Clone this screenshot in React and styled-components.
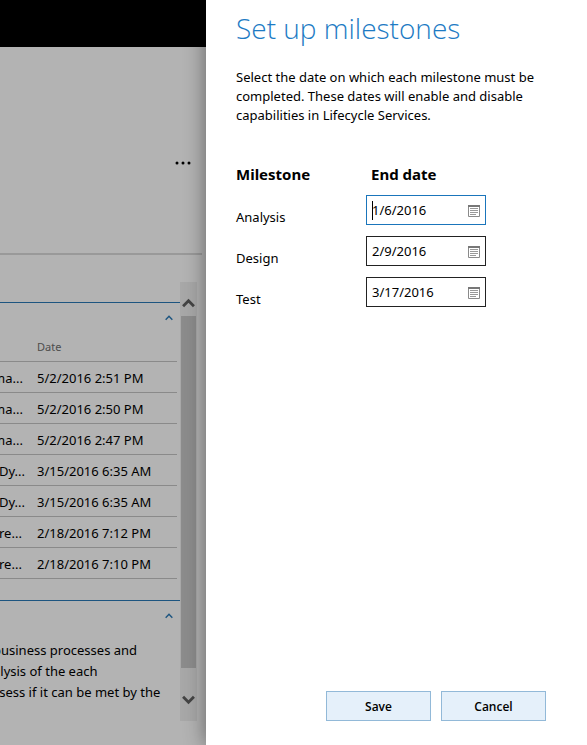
import React from "react";
import styled, { createGlobalStyle } from "styled-components";

const GlobalStyle = createGlobalStyle`
  *, *::before, *::after { box-sizing: border-box; }
  body {
    margin: 0;
    font: 13px/19px "Noto Sans", "Segoe UI", sans-serif;
    color: #000;
    background: #fff;
  }
`;

const Layout = styled.div`
  display: flex;
  min-height: 100vh;
  overflow: hidden;
`;

const Page = styled.div`
  flex: 1;
  min-width: 0;
  display: flex;
  flex-direction: column;
  background: #b3b3b3;
  overflow: hidden;
`;

const TopBar = styled.header`
  height: 47px;
  background: #000;
`;

const PageHeader = styled.div`
  display: flex;
  justify-content: flex-end;
  align-items: flex-end;
  height: 208px;
  margin-right: 4px;
  padding: 0 9px 84px 0;
  border-bottom: 2px solid #999;
`;

const MoreButton = styled.button`
  display: flex;
  padding: 4px 2px;
  border: 0;
  background: none;
  color: #000;
`;

const Scroller = styled.div`
  display: flex;
  height: 439px;
  margin: 27px 9px 24px 0;
`;

const Sections = styled.main`
  flex: 1;
  min-width: 0;
  padding-top: 20px;
`;

const Section = styled.section`
  border-top: 1px solid #1d5580;
  padding-bottom: 21px;
`;

const CollapseButton = styled.button`
  display: flex;
  margin: 0 5px 0 auto;
  padding: 11px 2px 7px;
  border: 0;
  background: none;
  color: #1d5580;
`;

const Activity = styled.table`
  width: calc(100% - 3px);
  table-layout: fixed;
  border-collapse: collapse;
  white-space: nowrap;

  th, td {
    height: 31px;
    padding: 4px 0 0;
    border-bottom: 1px solid #8a8a8a;
    text-align: left;
  }
  th {
    height: 32px;
    padding-top: 3px;
    font-size: 11px;
    font-weight: 400;
    color: #4d4d4d;
  }
  th:first-child { width: 37px; }
`;

const CutText = styled.span`
  margin-left: ${(p) => (p.$cut ? "-7px" : "-1px")};
`;

const Notes = styled.p`
  margin: 13px 0 0 -7px;
  line-height: 21px;
  white-space: nowrap;
`;

const Scrollbar = styled.div`
  width: 17px;
  display: flex;
  flex-direction: column;
  padding: 0 1px;
  background: #a8a8a8;
`;

const ScrollButton = styled.button`
  display: flex;
  justify-content: center;
  align-items: center;
  height: ${(p) => (p.$up ? "34px" : "53px")};
  padding: 9px 0 0;
  border: 0;
  background: none;
  color: #444;
`;

const Thumb = styled.div`
  flex: 1;
  background: #8c8c8c;
`;

const Panel = styled.form`
  position: relative;
  width: 381px;
  display: flex;
  flex-direction: column;
  padding: 8px 41px 24px 30px;
  background: #fff;
  box-shadow: 0 0 20px rgba(0, 0, 0, 0.45);
`;

const Title = styled.h1`
  margin: 0;
  font-family: "Open Sans", "Segoe UI", sans-serif;
  font-size: 28px;
  font-weight: 300;
  line-height: 40px;
  color: #1d7bc4;
`;

const Intro = styled.p`
  margin: 20px 0 0;
`;

const Milestones = styled.table`
  margin-top: 40px;
  border-collapse: collapse;
  align-self: flex-start;

  th {
    height: 24px;
    padding: 0;
    font-size: 15px;
    font-weight: 700;
    text-align: left;
    vertical-align: top;
  }
  th:first-child { width: 130px; }
  th:last-child { padding-left: 5px; }
  td {
    height: 41px;
    padding: 6px 0 5px;
  }
  td:first-child { padding: 19px 0 3px; }
`;

const DateField = styled.div`
  position: relative;
  display: flex;
  align-items: center;
  width: 120px;
  height: 30px;
  padding: 1px 5px;
  border: 1px solid ${(p) => (p.$active ? "#1a75bb" : "#222")};

  &::before {
    content: "";
    display: ${(p) => (p.$active ? "block" : "none")};
    position: absolute;
    left: 5px;
    top: 5px;
    width: 1px;
    height: 19px;
    background: #000;
  }
`;

const DateInput = styled.input`
  flex: 1;
  min-width: 0;
  padding: 1px 0 0;
  border: 0;
  outline: 0;
  background: none;
  color: #000;
  font: inherit;
`;

const CalendarButton = styled.button`
  display: flex;
  padding: 1px 0 0;
  border: 0;
  background: none;
`;

const Actions = styled.div`
  display: flex;
  justify-content: flex-end;
  gap: 10px;
  margin-top: auto;
`;

const ActionButton = styled.button`
  width: 105px;
  height: 30px;
  padding: 2px 0 0;
  border: 1px solid #92b9d8;
  background: #e5f0fa;
  color: #000;
  font: 600 12px/20px "Open Sans", "Segoe UI", sans-serif;
`;

function Chevron({ size, thick, down }) {
  return (
    <svg width={size} height={size} viewBox="0 0 12 12" aria-hidden="true">
      <path
        d={down ? "M1 3.5 L6 8.5 L11 3.5" : "M1 8.5 L6 3.5 L11 8.5"}
        fill="none"
        stroke="currentColor"
        strokeWidth={thick}
      />
    </svg>
  );
}

function CalendarIcon() {
  return (
    <svg width="12" height="12" viewBox="0 0 12 12" aria-hidden="true">
      <rect x="0" y="0" width="12" height="2" fill="#777" />
      <path d="M0.5 2V11.5H11.5V2" fill="none" stroke="#8a8a8a" />
      <path d="M2 3.5H10M2 5.5H10M2 7.5H10M2 9.5H8" stroke="#999" />
    </svg>
  );
}

const activity = [
  ["ma...", "5/2/2016 2:51 PM", true],
  ["ma...", "5/2/2016 2:50 PM", true],
  ["ma...", "5/2/2016 2:47 PM", true],
  ["Dy...", "3/15/2016 6:35 AM"],
  ["Dy...", "3/15/2016 6:35 AM"],
  ["re...", "2/18/2016 7:12 PM"],
  ["re...", "2/18/2016 7:10 PM"],
];

const milestones = [
  ["Analysis", "1/6/2016"],
  ["Design", "2/9/2016"],
  ["Test", "3/17/2016"],
];

export default function App() {
  return (
    <Layout>
      <GlobalStyle />
      <Page>
        <TopBar />
        <PageHeader>
          <MoreButton type="button" aria-label="More">
            <svg width="16" height="4" viewBox="0 0 16 4" aria-hidden="true">
              <circle cx="2" cy="2" r="1.5" />
              <circle cx="8" cy="2" r="1.5" />
              <circle cx="14" cy="2" r="1.5" />
            </svg>
          </MoreButton>
        </PageHeader>
        <Scroller>
          <Sections>
            <Section>
              <CollapseButton type="button" aria-label="Collapse activity">
                <Chevron size={8} thick={2.2} />
              </CollapseButton>
              <Activity>
                <thead>
                  <tr>
                    <th aria-label="Name" />
                    <th>Date</th>
                  </tr>
                </thead>
                <tbody>
                  {activity.map(([name, date, cut], i) => (
                    <tr key={i}>
                      <td><CutText $cut={cut}>{name}</CutText></td>
                      <td>{date}</td>
                    </tr>
                  ))}
                </tbody>
              </Activity>
            </Section>
            <Section>
              <CollapseButton type="button" aria-label="Collapse notes">
                <Chevron size={8} thick={2.2} />
              </CollapseButton>
              <Notes>
                business processes and<br />
                alysis of the each<br />
                ssess if it can be met by the
              </Notes>
            </Section>
          </Sections>
          <Scrollbar>
            <ScrollButton type="button" $up aria-label="Scroll up">
              <Chevron size={13} thick={2.6} />
            </ScrollButton>
            <Thumb />
            <ScrollButton type="button" aria-label="Scroll down">
              <Chevron size={13} thick={2.6} down />
            </ScrollButton>
          </Scrollbar>
        </Scroller>
      </Page>
      <Panel onSubmit={(e) => e.preventDefault()}>
        <Title>Set up milestones</Title>
        <Intro>
          Select the date on which each milestone must be completed. These dates will enable and
          disable capabilities in Lifecycle Services.
        </Intro>
        <Milestones>
          <thead>
            <tr>
              <th>Milestone</th>
              <th>End date</th>
            </tr>
          </thead>
          <tbody>
            {milestones.map(([name, date], i) => (
              <tr key={name}>
                <td><label htmlFor={name}>{name}</label></td>
                <td>
                  <DateField $active={i === 0}>
                    <DateInput id={name} type="text" defaultValue={date} />
                    <CalendarButton type="button" aria-label={`Pick ${name} date`}>
                      <CalendarIcon />
                    </CalendarButton>
                  </DateField>
                </td>
              </tr>
            ))}
          </tbody>
        </Milestones>
        <Actions>
          <ActionButton type="submit">Save</ActionButton>
          <ActionButton type="button">Cancel</ActionButton>
        </Actions>
      </Panel>
    </Layout>
  );
}
